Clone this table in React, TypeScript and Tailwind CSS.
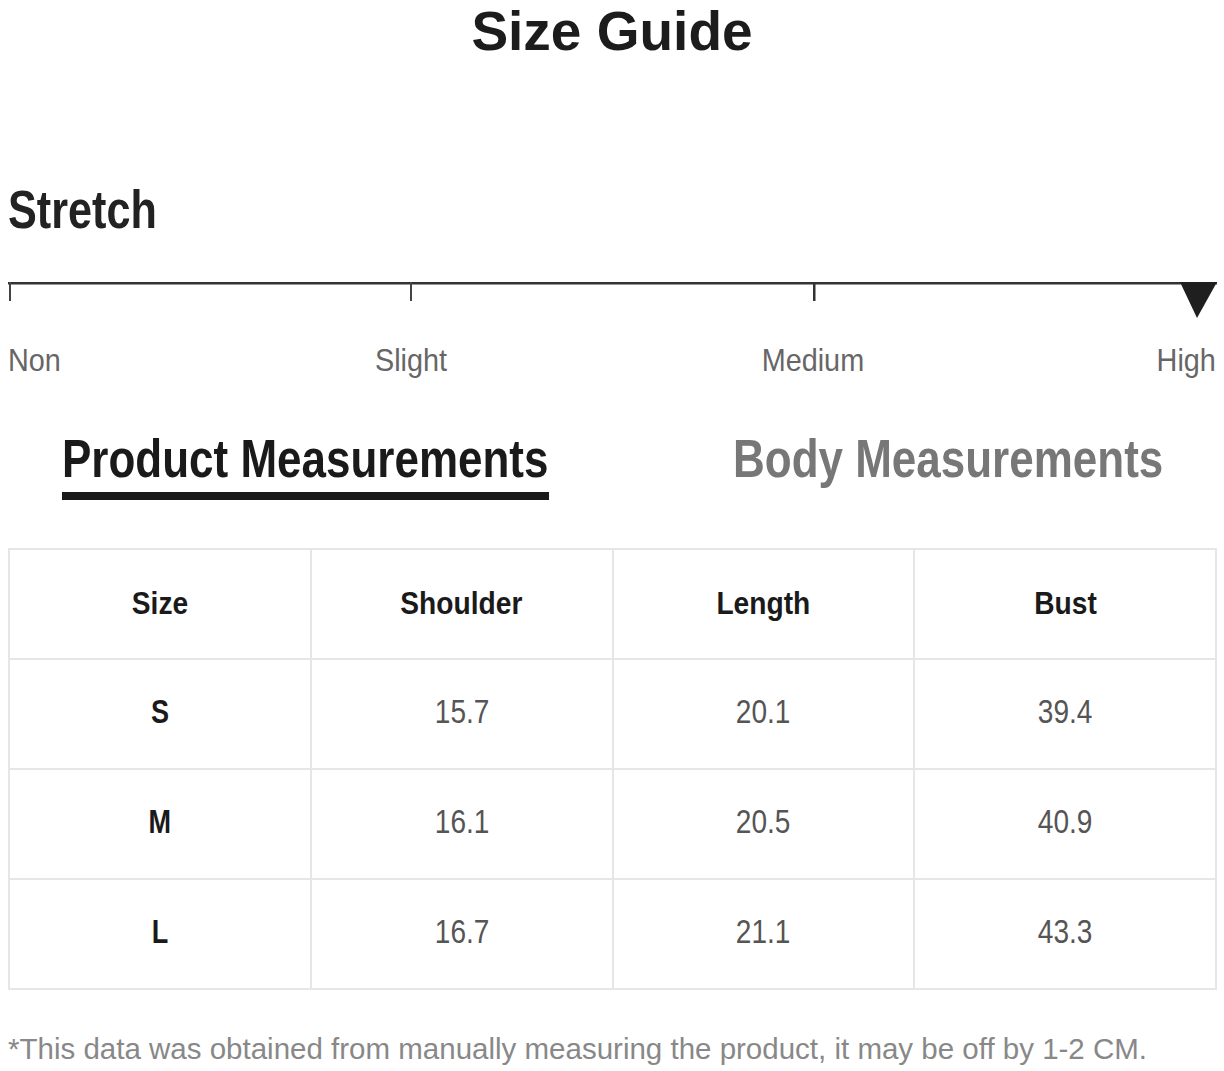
import React from "react";

const rows = [
  ["S", "15.7", "20.1", "39.4"],
  ["M", "16.1", "20.5", "40.9"],
  ["L", "16.7", "21.1", "43.3"],
];

const headers = ["Size", "Shoulder", "Length", "Bust"];

export default function App() {
  return (
    <div className="w-[1224px] h-[1071px] overflow-hidden bg-white px-[8px] font-['Liberation_Sans',Arial,sans-serif]">
      <h1 className="h-[62px] text-center text-[55px] font-bold leading-[62px] text-[#1c1c1c]">
        Size Guide
      </h1>

      <div className="mt-[120px] h-[54px] text-[54px] font-bold leading-[54px] text-[#222]">
        <span className="inline-block origin-left scale-x-[0.8] whitespace-nowrap">Stretch</span>
      </div>

      <svg className="mt-[46px] block" width="1209" height="37" viewBox="0 0 1209 37">
        <rect x="0" y="0" width="1209" height="2.5" fill="#333" />
        <rect x="1" y="0" width="2" height="19" fill="#444" />
        <rect x="402" y="0" width="2" height="19" fill="#444" />
        <rect x="805" y="0" width="2.5" height="19" fill="#333" />
        <polygon points="1172,0 1209,0 1189,36" fill="#1f1f1f" />
      </svg>

      <div className="mt-[25px] grid h-[32px] grid-cols-6 text-[32px] leading-[32px] text-[#666]">
        <div className="col-span-1">
          <span className="inline-block origin-left scale-x-[0.9] whitespace-nowrap">Non</span>
        </div>
        <div className="col-span-2 text-center">
          <span className="inline-block scale-x-[0.9] whitespace-nowrap">Slight</span>
        </div>
        <div className="col-span-2 text-center">
          <span className="inline-block scale-x-[0.9] whitespace-nowrap">Medium</span>
        </div>
        <div className="col-span-1 text-right">
          <span className="inline-block origin-right scale-x-[0.9] whitespace-nowrap">High</span>
        </div>
      </div>

      <div className="mt-[56px] flex pl-[54px]">
        <div className="w-[487px]">
          <div className="h-[53px] text-[53px] font-bold leading-[53px] text-[#1a1a1a]">
            <span className="inline-block origin-left scale-x-[0.83] whitespace-nowrap">Product Measurements</span>
          </div>
          <div className="mt-[7px] h-[8px] bg-[#1a1a1a]" />
        </div>
        <div className="ml-[184px] h-[53px] w-[430px] text-[53px] font-bold leading-[53px] text-[#777]">
          <span className="inline-block origin-left scale-x-[0.83] whitespace-nowrap">Body Measurements</span>
        </div>
      </div>

      <div className="mt-[48px] grid w-[1209px] grid-cols-4 gap-[2px] bg-[#e6e6e6] p-[2px]">
        {headers.map((h) => (
          <div key={h} className="flex h-[108px] items-center justify-center bg-white pb-[3px] text-[32px] font-bold leading-[32px] text-[#1a1a1a]">
            <span className="inline-block scale-x-[0.88] whitespace-nowrap">{h}</span>
          </div>
        ))}
        {rows.map((r) => (
          <React.Fragment key={r[0]}>
            <div className="flex h-[108px] items-center justify-center bg-white pb-[5px] text-[33px] font-bold leading-[33px] text-[#1a1a1a]">
              <span className="inline-block scale-x-[0.82] whitespace-nowrap">{r[0]}</span>
            </div>
            {r.slice(1).map((v, i) => (
              <div key={i} className="flex h-[108px] items-center justify-center bg-white pb-[5px] text-[33px] leading-[33px] text-[#555]">
                <span className="inline-block scale-x-[0.85] whitespace-nowrap">{v}</span>
              </div>
            ))}
          </React.Fragment>
        ))}
      </div>

      <p className="mt-[44px] whitespace-nowrap text-[29.5px] leading-[30px] text-[#888]">
        *This data was obtained from manually measuring the product, it may be off by 1-2 CM.
      </p>
    </div>
  );
}
